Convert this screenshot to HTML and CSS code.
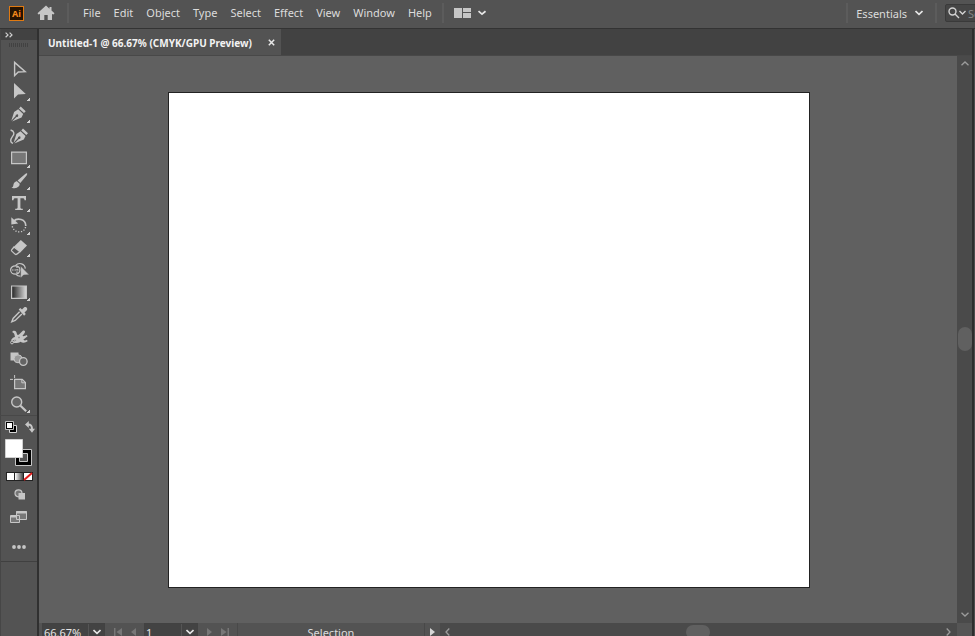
FILE: index.html
```html
<!DOCTYPE html>
<html lang="en">
<head>
<meta charset="utf-8">
<title>Untitled-1</title>
<link rel="stylesheet" href="styles.css">
</head>
<body>
<div class="app">
  <header class="topbar">
    <div class="brand">
      <span class="logo">Ai</span>
      <button class="home" aria-label="Home"><svg width="18" height="16" viewBox="0 0 18 16"><path fill="#c6c6c6" d="M9 .5.5 8.300 1.500 9.500 3 9v6h4.300v-5h3.400v5H15V9l1.500.5 1-1.200-3-2.700V2h-2v1.700z"/></svg></button>
    </div>
    <nav class="menu">
      <button>File</button><button>Edit</button><button>Object</button><button>Type</button><button>Select</button><button>Effect</button><button>View</button><button>Window</button><button>Help</button>
    </nav>
    <button class="arrange" aria-label="Arrange documents">
      <svg width="32" height="12" viewBox="0 0 32 12"><path fill="#c6c6c6" d="M0 1h8v10H0zM9 1h8v4H9zM9 6h8v5H9z"/><path fill="none" stroke="#e6e6e6" stroke-width="1.700" d="M24.500 4.200 28 7.200 31.500 4.200"/></svg>
    </button>
    <button class="workspace">Essentials <svg width="8" height="6" viewBox="0 0 8 6"><path fill="none" stroke="#e6e6e6" stroke-width="1.700" d="M.5 1 4 4.300 7.500 1"/></svg></button>
    <div class="searchwrap">
      <label class="search">
        <svg width="18" height="12" viewBox="0 0 18 12"><g fill="none" stroke="#d2d2d2" stroke-width="1.400"><circle cx="4.500" cy="4.500" r="3.500"/><path d="m7 7 4 4M11.500 4l3 3 3-3"/></g></svg>
        <input type="search" placeholder="Search" aria-label="Search">
      </label>
    </div>
  </header>

  <div class="main">
    <aside class="toolbar">
      <button class="expand" aria-label="Expand panel"><svg width="8" height="6" viewBox="0 0 8 6"><path fill="none" stroke="#d0d0d0" stroke-width="1.200" d="m.6.6 2.400 2.300L.6 5.200M4.600.6 7 2.900 4.600 5.200"/></svg></button>
      <div class="grip"></div>
      <div class="tools">
        <button aria-label="Selection"><svg viewBox="0 0 37 22"><path fill="none" stroke="#c6c6c6" stroke-width="1.400" d="M14.600 4.400v13.200l3.700-3.600 6.900-.3z"/></svg></button>
        <button aria-label="Direct selection" class="more"><svg viewBox="0 0 37 22"><path fill="#c6c6c6" d="M14 3v15.500l4-4 7.800-.4z"/></svg></button>
        <button aria-label="Pen" class="more"><svg viewBox="0 0 37 22"><path fill="#c6c6c6" d="m20.700 3.600 5 4.700-1.700 1.800-5-4.700zM18.200 6.200l5 4.800-1.700 3.500-9.500 4 4.500-4.600a1.300 1.300 0 1 0-.8-.8L11.300 17.700l2.800-8.800z"/></svg></button>
        <button aria-label="Curvature"><svg viewBox="0 0 37 22"><path fill="#c6c6c6" d="m23 3.600 5 4.700-1.700 1.800-5-4.700zM20.500 6.200l5 4.800-1.700 3.500-9.500 4 4.500-4.600a1.300 1.300 0 1 0-.8-.8l-4.400 4.600 2.800-8.800z"/><path fill="none" stroke="#c6c6c6" stroke-width="1.400" d="M10.600 5c4 1.200 4 4 1.800 6.600-2.400 3.200-2.300 5.900.6 6.700"/></svg></button>
        <button aria-label="Rectangle" class="more"><svg viewBox="0 0 37 22"><path fill="#777" stroke="#c6c6c6" stroke-width="1.200" d="M11.600 5.100h14.800v11.600H11.600z"/></svg></button>
        <button aria-label="Paintbrush" class="more"><svg viewBox="0 0 37 22"><path fill="#c6c6c6" d="M27 3.300c.5.500.1 1.400-.4 2.100l-6.300 7.700-2.700-2.500 7.600-6.600c.7-.6 1.400-1 1.800-.7zM17 11.200l2.700 2.500c.2 3.400-4.100 5.100-8.300 4.400 2.500-1.200 1.500-3.200 2.800-5.300.8-1.100 1.800-1.600 2.800-1.600z"/></svg></button>
        <button aria-label="Type" class="more"><svg viewBox="0 0 37 22"><path fill="#c6c6c6" d="M12 4h14v4.200h-1.500c-.1-1.400-.6-2-2-2h-2.100v9.300c0 .8.500 1.200 2.400 1.300V18h-7.600v-1.200c1.900-.1 2.400-.5 2.400-1.300V6.200h-2.100c-1.400 0-1.900.6-2 2H12z"/></svg></button>
        <button aria-label="Rotate" class="more"><svg viewBox="0 0 37 22"><path fill="none" stroke="#c6c6c6" stroke-width="1.700" d="M13.500 7.300c4-4.200 12.300-2 12.300 4.600"/><path fill="#c6c6c6" d="M11.300 3.200v7.200l6.900-1z"/><path fill="none" stroke="#c6c6c6" stroke-width="1.400" stroke-dasharray="1.200 1.600" d="M25.500 13c-1 6.500-11.500 6.700-13.300-.8"/></svg></button>
        <button aria-label="Eraser" class="more"><svg viewBox="0 0 37 22"><path fill="#c6c6c6" d="m20.800 3 6.200 5.600-6.500 6.700-6.400-5.700z"/><path fill="none" stroke="#c6c6c6" stroke-width="1.300" d="m14 10-2.200 2.600c-.5.600-.5 1 0 1.500l3.200 3c.6.500 1.300.5 1.800 0l3.200-2.300z"/></svg></button>
        <button aria-label="Shape builder"><svg viewBox="0 0 37 22"><g fill="none" stroke="#c6c6c6" stroke-width="1.200"><ellipse cx="15.300" cy="11" rx="4.700" ry="4.200"/><path d="M15.500 6.600c3.500-4.100 9.500-1.500 9.800 3M16 15.400c1.300 1.500 3.200 1.900 5 1.700"/><path stroke-dasharray="1.500 1" d="M12 11h9M17 7.500v6.800"/></g><path fill="#c6c6c6" stroke="#535353" stroke-width=".5" d="M20.600 7v12l3-3 5.600-.2z"/></svg></button>
        <button aria-label="Gradient" class="more"><svg viewBox="0 0 37 22"><defs><linearGradient id="gt"><stop stop-color="#222"/><stop offset="1" stop-color="#ddd"/></linearGradient></defs><path fill="url(#gt)" stroke="#c6c6c6" stroke-width="1.200" d="M11.600 5h14.800v12.400H11.600z"/></svg></button>
        <button aria-label="Eyedropper"><svg viewBox="0 0 37 22"><path fill="none" stroke="#c6c6c6" stroke-width="1.400" d="m19.600 7.800-6.500 6.600-1.300 3.400 3.400-1.400 6.700-6.500"/><path fill="#c6c6c6" d="m18.700 5.500 1.600-1.400 1.700 1.300 2-2c2-1.500 4.200 1 2.800 2.900l-2.300 2.300 1.300 1.500-1.700 1.700z"/></svg></button>
        <button aria-label="Puppet warp"><svg viewBox="0 0 37 22"><path fill="#c6c6c6" d="M12.500 5.200c2.500-1.200 4 .2 4.300 2.400.2 1.400 1.200 1.700 2.500.7l3.500-3.500c1.700-1 3 .5 1.800 2.100l-2.200 3.200c1.600.4 3-.5 4.200-1.100l1 1.200c-1.800 1.500-3.400 2.400-4.200 3.400 1 1.500 2.300 1 3.600.2l.6 1.500c-2.300 1.800-5 1.900-7.200.4-2 1.500-4.700 1.600-7.600 1.200l.6-1.500c1.700-.1 2.600-.7 3-1.700-1.900-.1-3.400.4-4.200 1.500l-1.200-1c1-2.100 2.500-3 4-3.300-.5-1.500-.2-3.700-2.500-4.400z"/><path fill="none" stroke="#c6c6c6" d="m12 16.500 7-5"/><g fill="#535353" stroke="#c6c6c6"><circle cx="12" cy="16.500" r="1.400"/><circle cx="19" cy="11.500" r="1"/></g></svg></button>
        <button aria-label="Blend"><svg viewBox="0 0 37 22"><path fill="#c6c6c6" d="M10.500 4.500h8v8h-8z"/><circle cx="18" cy="10.800" r="4" fill="#999" stroke="#c6c6c6"/><circle cx="23.300" cy="13.500" r="3.800" fill="#646464" stroke="#c6c6c6" stroke-width="1.300"/></svg></button>
        <button aria-label="Artboard"><svg viewBox="0 0 37 22"><path fill="#777" stroke="#c6c6c6" stroke-width="1.200" d="M14.600 8.400h7.600l3.200 3v6.300H14.600z"/><path fill="none" stroke="#c6c6c6" d="M10 8.400h3M14.600 4v3M21.800 8.500v3.300h3.500"/></svg></button>
        <button aria-label="Zoom" class="more"><svg viewBox="0 0 37 22"><circle cx="16.700" cy="9" r="5" fill="#646464" stroke="#c6c6c6" stroke-width="1.400"/><path stroke="#c6c6c6" stroke-width="2.200" d="m20.500 12.800 5.700 5.400"/></svg></button>
      </div>
      <div class="colors">
        <div class="color-row">
          <button aria-label="Default fill and stroke"><svg width="12" height="12" viewBox="0 0 12 12"><path fill="#000" stroke="#d5d5d5" d="M4.500 4.500h7v7h-7z"/><path fill="#000" stroke="#bbb" d="M.5.5h8v8h-8z"/><path fill="#fff" d="M2 2h5v5H2z"/></svg></button>
          <button aria-label="Swap fill and stroke"><svg width="10" height="12" viewBox="0 0 10 12"><path fill="none" stroke="#c6c6c6" stroke-width="2" d="M2.500 3.500C6 3.300 7.200 4.800 7 8.500"/><path fill="#c6c6c6" d="M0 3.500 3.800 0v7zM3.800 7.800H10l-3 4z"/></svg></button>
        </div>
        <button class="fillstroke" aria-label="Fill and stroke"><svg width="28" height="28" viewBox="0 0 28 28"><path fill="#000" stroke="#c6c6c6" d="M10.500 10.500h16v16h-16z"/><path fill="#535353" stroke="#c6c6c6" d="M14.500 14.500h8v8h-8z"/><path fill="#fff" stroke="#d0d0d0" d="M.5.5h17v18H.5z"/></svg></button>
        <button class="modes" aria-label="Color, gradient, none"><svg width="27" height="9" viewBox="0 0 27 9"><defs><linearGradient id="gm"><stop stop-color="#fff"/><stop offset="1" stop-color="#444"/></linearGradient></defs><path fill="#222" d="M0 0h27v9H0z"/><path fill="#fff" d="M1 1h7v7H1zM18 1h8v7h-8z"/><path fill="url(#gm)" d="M9 1h8v7H9z"/><path stroke="#e21b1b" stroke-width="2" d="m18 8 8-7"/></svg></button>
        <button class="drawmode" aria-label="Drawing mode"><svg width="12" height="11" viewBox="0 0 12 11"><circle cx="4.500" cy="4.300" r="3.500" fill="#777" stroke="#c6c6c6" stroke-width="1.200"/><path fill="#c6c6c6" d="M4.500 4H11v6.500H4.500z"/></svg></button>
        <button class="screen" aria-label="Screen mode"><svg width="18" height="13" viewBox="0 0 18 13"><g fill="#777" stroke="#c6c6c6"><path d="M.5 4.500h9v7h-9zM6.500.5h10v8h-10z"/></g><path stroke="#c6c6c6" stroke-width="2" d="M6 1.500h11M1 5.500h5"/></svg></button>
        <button class="dots" aria-label="Edit toolbar"><svg width="14" height="4" viewBox="0 0 14 4"><g fill="#c6c6c6"><circle cx="2" cy="2" r="1.900"/><circle cx="7" cy="2" r="1.900"/><circle cx="12" cy="2" r="1.900"/></g></svg></button>
      </div>
    </aside>

    <section class="document">
      <div class="tabs">
        <div class="tab"><span>Untitled-1 @ 66.67% (CMYK/GPU Preview)</span><button aria-label="Close"><svg width="7" height="7" viewBox="0 0 7 7"><path stroke="#e8e8e8" stroke-width="1.500" d="m.8.8 5.400 5.400M6.200.8.8 6.200"/></svg></button></div>
      </div>
      <div class="view">
        <div class="canvas"><div class="artboard"></div></div>
        <div class="vscroll">
          <svg width="8" height="5" viewBox="0 0 8 5"><path fill="none" stroke="#9c9c9c" stroke-width="1.300" d="M.5 4.300 4 1l3.500 3.300"/></svg>
          <i class="vthumb"></i>
          <svg width="8" height="5" viewBox="0 0 8 5"><path fill="none" stroke="#9c9c9c" stroke-width="1.300" d="M.5.7 4 4 7.500.7"/></svg>
        </div>
      </div>
      <footer class="status">
        <div class="combo zoom"><input value="66.67%" aria-label="Zoom level"><button aria-label="Zoom presets"><svg width="8" height="6" viewBox="0 0 8 6"><path fill="none" stroke="#e6e6e6" stroke-width="1.600" d="M.5 1 4 4.300 7.500 1"/></svg></button></div>
        <div class="pager">
          <button aria-label="First"><svg width="8" height="8" viewBox="0 0 8 8"><path fill="#777" d="M0 0h1.500v8H0zM8 0v8L2.500 4z"/></svg></button>
          <button aria-label="Previous"><svg width="5" height="8" viewBox="0 0 5 8"><path fill="#777" d="M5 0v8L0 4z"/></svg></button>
        </div>
        <div class="combo page"><input value="1" aria-label="Artboard number"><button aria-label="Artboards"><svg width="8" height="6" viewBox="0 0 8 6"><path fill="none" stroke="#e6e6e6" stroke-width="1.600" d="M.5 1 4 4.300 7.500 1"/></svg></button></div>
        <div class="pager">
          <button aria-label="Next"><svg width="5" height="8" viewBox="0 0 5 8"><path fill="#777" d="M0 0v8l5-4z"/></svg></button>
          <button aria-label="Last"><svg width="8" height="8" viewBox="0 0 8 8"><path fill="#777" d="M6.500 0H8v8H6.500zM0 0v8l5.500-4z"/></svg></button>
        </div>
        <div class="current">Selection</div>
        <button class="play" aria-label="Status options"><svg width="5" height="8" viewBox="0 0 5 8"><path fill="#d6d6d6" d="M0 0v8l5-4z"/></svg></button>
        <div class="hscroll">
          <svg width="5" height="8" viewBox="0 0 5 8"><path fill="none" stroke="#9c9c9c" stroke-width="1.300" d="M4.300.5 1 4l3.300 3.500"/></svg>
          <i class="hthumb"></i>
          <svg width="5" height="8" viewBox="0 0 5 8"><path fill="none" stroke="#9c9c9c" stroke-width="1.300" d="M.7.5 4 4 .7 7.500"/></svg>
        </div>
        <div class="corner"></div>
      </footer>
    </section>
  </div>
</div>
</body>
</html>
```
FILE: styles.css
```css
* { box-sizing: border-box; }
body { margin: 0; background: #535353; color: #dcdcdc; font-family: "Noto Sans", "Open Sans", sans-serif; font-size: 11px; }
button { display: flex; align-items: center; justify-content: center; margin: 0; padding: 0; border: 0; background: none; color: inherit; font: inherit; }
input { min-width: 0; padding: 0; border: 0; outline: 0; background: none; color: inherit; font: inherit; }
svg { display: block; flex: none; }
.app { display: flex; flex-direction: column; height: 100vh; overflow: hidden; }

.topbar { display: flex; flex: none; align-items: center; height: 29px; padding-bottom: 2px; border-bottom: 1px solid #333; }
.brand { display: flex; align-items: center; gap: 13px; width: 69px; height: 20px; padding-left: 9px; border-right: 2px solid #5c5c5c; }
.logo { width: 15px; height: 15px; border: 1px solid #e07a12; background: #261300; color: #f58a1c; font-size: 9px; font-weight: 700; line-height: 13px; text-align: center; }
.menu { display: flex; gap: 13px; padding: 0 10px 0 14px; line-height: 20px; }
.arrange { height: 20px; padding-left: 10px; border-left: 2px solid #5c5c5c; }
.workspace { gap: 8px; height: 20px; margin-left: auto; padding: 0 12px 0 8px; border-left: 2px solid #5c5c5c; }
.searchwrap { display: flex; align-items: center; width: 40px; height: 20px; padding-left: 8px; border-left: 2px solid #5c5c5c; overflow: hidden; }
.search { display: flex; flex: none; align-items: center; gap: 2px; height: 18px; padding-left: 2px; border: 1px solid #3a3a3a; border-radius: 2px; background: #454545; }
.search input { width: 60px; }
.search input::placeholder { color: #858585; opacity: 1; }

.main { display: flex; flex: 1; min-height: 0; padding-right: 3px; background: linear-gradient(to left, #4c4c4c 1px, #2d2d2d 1px); }
.toolbar { flex: none; width: 39px; border-left: 1px solid #464646; border-right: 2px solid #303030; background: #535353; }
.expand { justify-content: flex-start; width: 100%; height: 11px; padding-left: 4px; background: #424242; }
.grip { height: 4px; margin: 3px 9px 11px 8px; background: repeating-linear-gradient(to right, #424242 0 1px, #535353 1px 2px); }
.tools { display: grid; grid-template-rows: repeat(16, 1fr); height: 358px; margin-left: -1px; border-bottom: 1px solid #484848; }
.tools button { position: relative; justify-content: flex-start; }
.tools svg { width: 37px; height: 22px; }
.more::after { position: absolute; right: 7px; bottom: 2px; width: 3px; height: 3px; background: linear-gradient(135deg, transparent 40%, #d0d0d0 40%); content: ""; }
.colors { display: grid; grid-template-rows: 21px 31px 16px 21px 24px 32px; align-items: center; justify-items: start; border-bottom: 1px solid #404040; }
.color-row { display: flex; gap: 8px; padding-left: 4px; }
.fillstroke { padding-left: 4px; }
.modes { padding-left: 5px; }
.drawmode { padding-left: 13px; }
.screen { padding-left: 9px; }
.dots { padding: 4px 0 0 11px; }

.document { display: flex; flex: 1; flex-direction: column; min-width: 0; }
.tabs { display: flex; flex: none; height: 27px; border-bottom: 1px solid #484848; background: #424242; }
.tab { display: flex; align-items: center; gap: 16px; padding: 0 6px 0 9px; background: #535353; color: #f2f2f2; font-size: 10px; font-weight: 700; line-height: 14px; white-space: nowrap; }
.tab span { padding-top: 2px; }
.view { display: flex; flex: 1; min-height: 0; }
.canvas { display: flex; flex: 1; padding: 36px 147px 35px 129px; background: #606060; }
.artboard { flex: 1; border: 1px solid #222; background: #fff; }
.vscroll { display: flex; flex-direction: column; align-items: center; justify-content: space-between; width: 15px; padding: 5px 0 6px; background: #4a4a4a; }
.vthumb { width: 14px; height: 24px; border-radius: 7px; background: #606060; }
.status { display: flex; flex: none; align-items: flex-start; height: 13px; overflow: hidden; background: #535353; line-height: 19px; }
.status > * { flex: none; height: 18px; }
.combo { display: flex; border: 1px solid #424242; background: #434343; color: #e6e6e6; }
.combo input { flex: 1; padding: 1px 0 0 1px; }
.combo button { width: 16px; border-left: 1px solid #555; }
.zoom { width: 63px; margin-left: 3px; }
.page { width: 54px; }
.pager { display: flex; align-items: center; justify-content: center; gap: 9px; width: 39px; }
.status .current { flex: 0 1 187px; border-left: 1px solid #494949; text-align: center; }
.play { width: 16px; border-left: 1px solid #484848; }
.status .hscroll { display: flex; flex: 1; align-items: center; justify-content: space-between; padding: 0 6px 0 5px; background: #4a4a4a; }
.hthumb { width: 24px; height: 14px; border-radius: 7px; background: #606060; }
.corner { width: 15px; background: #555; }
```
